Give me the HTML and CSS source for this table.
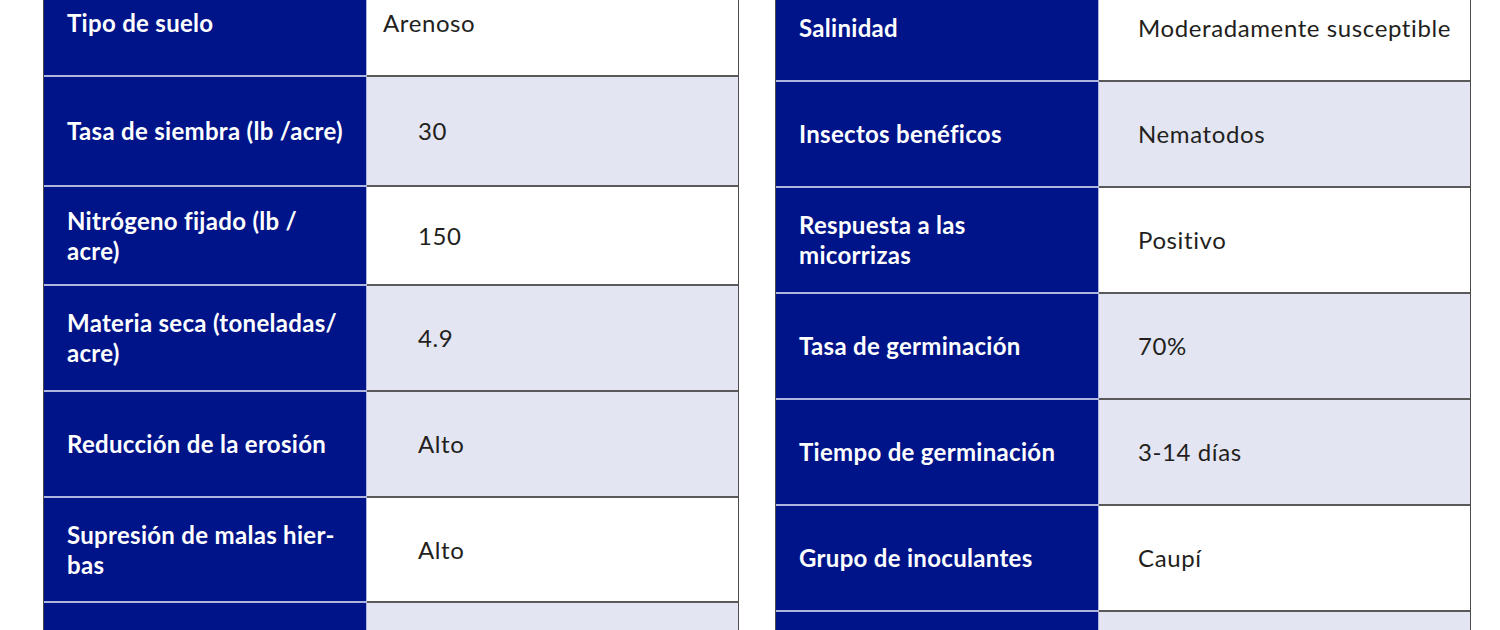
FILE: index.html
```html
<!DOCTYPE html>
<html lang="es">
<head>
<meta charset="utf-8">
<title>Tabla de cultivo de cobertura</title>
<link rel="stylesheet" href="styles.css">
</head>
<body>
<div class="page">
  <div class="table table-left">
    <div class="row"><div class="label">Tipo de suelo</div><div class="value value-first">Arenoso</div></div>
    <div class="row alt"><div class="label">Tasa de siembra (lb /acre)</div><div class="value">30</div></div>
    <div class="row"><div class="label">Nitrógeno fijado (lb /<br>acre)</div><div class="value">150</div></div>
    <div class="row alt"><div class="label">Materia seca (toneladas/<br>acre)</div><div class="value">4.9</div></div>
    <div class="row alt"><div class="label">Reducción de la erosión</div><div class="value">Alto</div></div>
    <div class="row"><div class="label">Supresión de malas hier-<br>bas</div><div class="value">Alto</div></div>
    <div class="row alt"><div class="label"></div><div class="value"></div></div>
  </div>
  <div class="table table-right">
    <div class="row"><div class="label">Salinidad</div><div class="value">Moderadamente susceptible</div></div>
    <div class="row alt"><div class="label">Insectos benéficos</div><div class="value">Nematodos</div></div>
    <div class="row"><div class="label">Respuesta a las<br>micorrizas</div><div class="value">Positivo</div></div>
    <div class="row alt"><div class="label">Tasa de germinación</div><div class="value">70%</div></div>
    <div class="row alt"><div class="label">Tiempo de germinación</div><div class="value">3-14 días</div></div>
    <div class="row"><div class="label">Grupo de inoculantes</div><div class="value">Caupí</div></div>
    <div class="row alt"><div class="label"></div><div class="value"></div></div>
  </div>
</div>
</body>
</html>
```
FILE: styles.css
```css
* { box-sizing: border-box; }
html, body {
  margin: 0;
  padding: 0;
  background: #ffffff;
  overflow: hidden;
}
body {
  font-family: "Lato", "Open Sans", "Liberation Sans", sans-serif;
  font-size: 24px;
  line-height: 30px;
  color: #231f20;
}
.page {
  display: flex;
  align-items: flex-start;
  gap: 36px;
  padding-left: 43px;
}
.table {
  display: grid;
  width: 696px;
  border-left: 1px solid #4d4d4d;
  border-right: 1px solid #4d4d4d;
}
.table-left {
  margin-top: -29px;
  grid-template-rows: 106px 110px 99px 106px 106px 105px 106px;
}
.table-right {
  margin-top: -24px;
  grid-template-rows: repeat(7, 106px);
}
.row {
  display: grid;
  grid-template-columns: 323px 1fr;
}
.label {
  display: flex;
  align-items: center;
  background: #001489;
  color: #ffffff;
  font-weight: 700;
  letter-spacing: 0.3px;
  padding-left: 23px;
  border-right: 1px solid #aeb6e0;
  border-bottom: 2px solid #aeb6e0;
}
.value {
  display: flex;
  align-items: center;
  background: #ffffff;
  letter-spacing: 0.6px;
  padding-left: 51px;
  border-bottom: 2px solid #5a5a5a;
}
.row.alt .value { background: #e3e6f2; }
.table-left .value-first { padding-left: 16px; }
.table-right .value { padding-left: 39px; }
```
